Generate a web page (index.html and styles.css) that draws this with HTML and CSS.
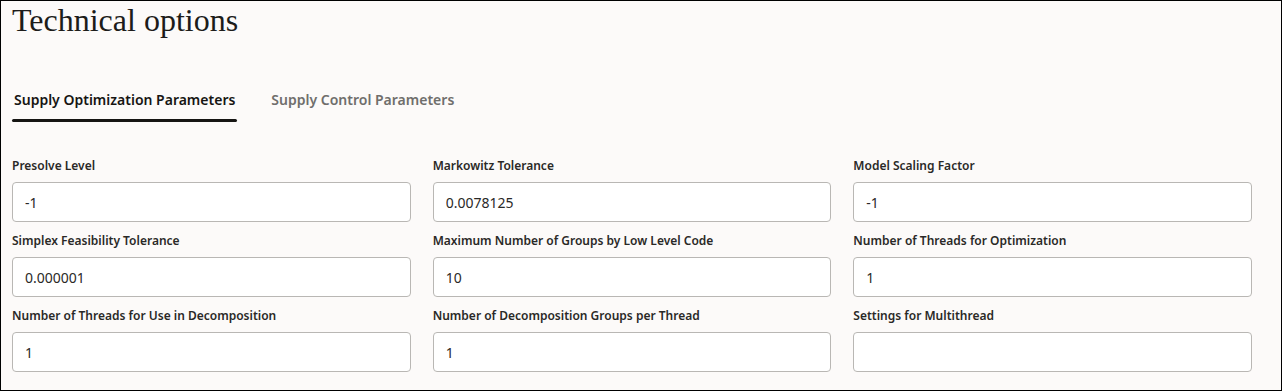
FILE: index.html
```html
<!DOCTYPE html>
<html lang="en">
<head>
    <meta charset="UTF-8">
    <meta name="viewport" content="width=device-width, initial-scale=1.0">
    <title>Technical options</title>
    <link rel="stylesheet" href="styles.css">
</head>
<body>
    <div class="page">
        <h1 class="title">Technical options</h1>

        <div class="tabs">
            <div class="tab active">Supply Optimization Parameters</div>
            <div class="tab">Supply Control Parameters</div>
        </div>

        <div class="form-grid">
            <div class="field">
                <label>Presolve Level</label>
                <input type="text" value="-1">
            </div>
            <div class="field">
                <label>Markowitz Tolerance</label>
                <input type="text" value="0.0078125">
            </div>
            <div class="field">
                <label>Model Scaling Factor</label>
                <input type="text" value="-1">
            </div>
            <div class="field">
                <label>Simplex Feasibility Tolerance</label>
                <input type="text" value="0.000001">
            </div>
            <div class="field">
                <label>Maximum Number of Groups by Low Level Code</label>
                <input type="text" value="10">
            </div>
            <div class="field">
                <label>Number of Threads for Optimization</label>
                <input type="text" value="1">
            </div>
            <div class="field">
                <label>Number of Threads for Use in Decomposition</label>
                <input type="text" value="1">
            </div>
            <div class="field">
                <label>Number of Decomposition Groups per Thread</label>
                <input type="text" value="1">
            </div>
            <div class="field">
                <label>Settings for Multithread</label>
                <input type="text" value="">
            </div>
        </div>
    </div>
</body>
</html>
```

FILE: styles.css
```css
html, body {
    margin: 0;
    padding: 0;
}
body {
    font-family: "Noto Sans", Arial, sans-serif;
    color: #161513;
}
.page {
    box-sizing: border-box;
    width: 1282px;
    height: 391px;
    border: 1px solid #000;
    background-color: #fcfaf9;
    padding: 1px 29px 0 11px;
}
.title {
    font-family: "Liberation Serif", "Times New Roman", serif;
    font-weight: normal;
    font-size: 32px;
    line-height: 36px;
    margin: 0;
    color: #1d1c1a;
}
.tabs {
    display: flex;
    gap: 32px;
    margin-top: 52px;
}
.tab {
    font-size: 14px;
    line-height: 20px;
    font-weight: 600;
    padding: 0 2px 9px;
    color: #6f6e6c;
    position: relative;
}
.tab.active {
    color: #161513;
}
.tab.active::after {
    content: "";
    position: absolute;
    left: 0;
    right: 0;
    bottom: -3px;
    height: 3px;
    border-radius: 2px;
    background-color: #161513;
}
.form-grid {
    display: grid;
    grid-template-columns: repeat(3, 1fr);
    column-gap: 22px;
    row-gap: 11px;
    margin-top: 39px;
}
.field {
    display: flex;
    flex-direction: column;
}
.field label {
    font-size: 12px;
    line-height: 16px;
    font-weight: 600;
    color: #2a2927;
    margin-bottom: 8px;
}
.field input {
    box-sizing: border-box;
    height: 40px;
    border: 1px solid #b9b7b4;
    border-radius: 4px;
    background-color: #fff;
    padding: 0 12px;
    font-family: "Noto Sans", Arial, sans-serif;
    font-size: 14px;
    color: #2a2927;
    outline: none;
}
```
